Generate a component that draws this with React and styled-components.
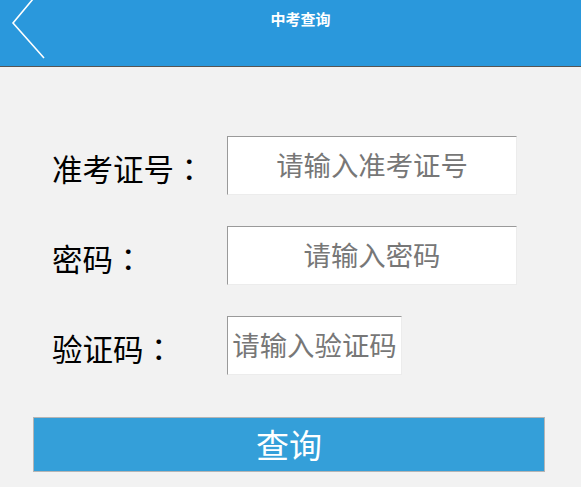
import React from 'react';
import styled, { createGlobalStyle } from 'styled-components';

const GlobalStyle = createGlobalStyle`
  html, body {
    margin: 0;
    padding: 0;
    background: #f2f2f2;
    font-family: "Liberation Sans", "Noto Sans CJK SC", sans-serif;
  }
`;

const Page = styled.div`
  width: 581px;
  min-height: 487px;
  background: #f2f2f2;
`;

const Header = styled.div`
  display: flex;
  height: 66px;
  background: #2a98dc;
  border-bottom: 1px solid #555;
`;

const Back = styled.div`
  width: 20px;
  height: 66px;
  position: relative;
  svg {
    position: absolute;
    left: 0;
    top: 0;
  }
`;

const Title = styled.div`
  flex: 1;
  text-align: center;
  padding-top: 8px;
  color: #fff;
  font-size: 15px;
  font-weight: 700;
  font-family: "Noto Sans CJK SC", sans-serif;
`;

const Form = styled.div`
  display: flex;
  flex-direction: column;
  gap: 31px;
  padding: 69px 0 0 52px;
`;

const Row = styled.div`
  display: flex;
  align-items: center;
`;

const Label = styled.label`
  width: 175px;
  padding-top: 4px;
  font-size: 30.5px;
  color: #000;
  font-family: "Noto Sans CJK SC", sans-serif;
  white-space: nowrap;
`;

// the colon sits in the middle of its box, as in traditional-chinese fonts
const Colon = styled.span`
  font-family: "Noto Sans CJK TC", sans-serif;
`;

const Input = styled.input`
  box-sizing: border-box;
  width: ${(p) => p.w}px;
  height: 59px;
  padding: 0 3px 3px;
  border: 1px solid;
  border-color: #9a9a9a #ececec #ececec #9a9a9a;
  background: #fff;
  text-align: center;
  font-size: 27.4px;
  font-family: "Noto Sans CJK SC", sans-serif;
  outline: none;
  &::placeholder {
    color: #777;
  }
`;

const Submit = styled.button`
  display: block;
  box-sizing: border-box;
  width: 512px;
  height: 55px;
  margin: 42px 0 0 33px;
  background: #349fd9;
  border: 1px solid #b5b5b5;
  color: #fff;
  font-size: 33px;
  font-family: "Noto Sans CJK SC", sans-serif;
  line-height: 1;
`;

export default function App() {
  return (
    <Page>
      <GlobalStyle />
      <Header>
        <Back>
          <svg width="50" height="60" viewBox="0 0 50 60">
            <polyline points="33,-1 13,23 44,58" fill="none" stroke="#fff" strokeWidth="1.6" />
          </svg>
        </Back>
        <Title>中考查询</Title>
      </Header>
      <Form>
        <Row>
          <Label>准考证号<Colon>：</Colon></Label>
          <Input w={290} placeholder="请输入准考证号" />
        </Row>
        <Row>
          <Label>密码<Colon>：</Colon></Label>
          <Input w={290} type="password" placeholder="请输入密码" />
        </Row>
        <Row>
          <Label>验证码<Colon>：</Colon></Label>
          <Input w={175} placeholder="请输入验证码" />
        </Row>
      </Form>
      <Submit>查询</Submit>
    </Page>
  );
}
